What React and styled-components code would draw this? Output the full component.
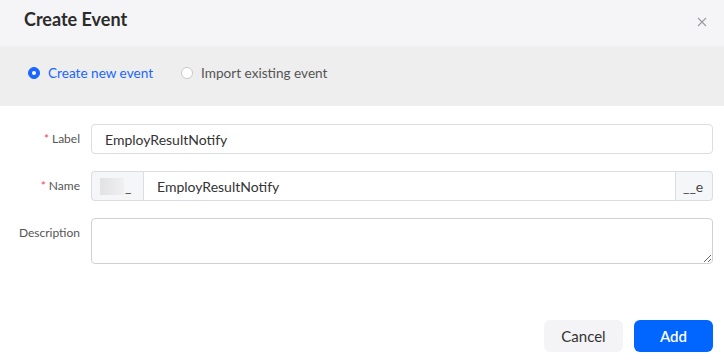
import React, { useState } from 'react';
import styled, { createGlobalStyle } from 'styled-components';

const GlobalStyle = createGlobalStyle`
  html, body {
    margin: 0;
    padding: 0;
    background: #ffffff;
  }
  body {
    font-family: Lato, "Liberation Sans", sans-serif;
    color: #333333;
  }
  * {
    box-sizing: border-box;
  }
`;

const Modal = styled.div`
  width: 724px;
  height: 360px;
  background: #ffffff;
  display: flex;
  flex-direction: column;
`;

const Header = styled.div`
  height: 46px;
  background: #f5f5f7;
  display: flex;
  align-items: flex-start;
  justify-content: space-between;
  padding: 7px 17px 0 24px;
`;

const Title = styled.h2`
  margin: 0;
  font-size: 18px;
  line-height: 24px;
  font-weight: 700;
  color: #2b2b2b;
`;

const CloseButton = styled.button`
  border: none;
  background: none;
  padding: 0;
  margin-top: 10px;
  width: 10px;
  height: 10px;
  display: flex;
  cursor: pointer;
`;

const ModeBand = styled.div`
  height: 60px;
  background: #eeeeee;
  display: flex;
  align-items: center;
  gap: 28px;
  padding: 0 0 6px 28px;
`;

const RadioOption = styled.label`
  display: flex;
  align-items: center;
  gap: 8px;
  font-size: 13.6px;
  color: ${(p) => (p.$checked ? '#1a66ff' : '#555555')};
  cursor: pointer;
`;

const RadioDot = styled.span`
  width: 12px;
  height: 12px;
  border-radius: 50%;
  background: ${(p) => (p.$checked ? '#1a66ff' : '#ffffff')};
  border: 1px solid ${(p) => (p.$checked ? '#1a66ff' : '#c9c9ce')};
  display: flex;
  align-items: center;
  justify-content: center;

  &::after {
    content: '';
    width: 4px;
    height: 4px;
    border-radius: 50%;
    background: #ffffff;
    display: ${(p) => (p.$checked ? 'block' : 'none')};
  }
`;

const Form = styled.div`
  display: grid;
  grid-template-columns: 80px 1fr;
  column-gap: 11px;
  row-gap: 17px;
  padding: 18px 11px 0 0;
`;

const FieldLabel = styled.div`
  font-size: 12px;
  line-height: 30px;
  color: #555555;
  text-align: right;
  white-space: nowrap;
`;

const Required = styled.span`
  color: #f5454f;
  margin-right: 3px;
`;

const TextInput = styled.input`
  height: 30px;
  width: 100%;
  border: 1px solid #dcdde2;
  border-radius: ${(p) => p.$radius || '4px'};
  padding: 0 13px;
  font-family: inherit;
  font-size: 14px;
  color: #333333;
  outline: none;
  background: #ffffff;
`;

const Group = styled.div`
  display: flex;
  height: 30px;
`;

const Addon = styled.div`
  height: 30px;
  width: ${(p) => p.$width};
  flex: none;
  background: #f5f6f8;
  border: 1px solid #dcdde2;
  border-radius: ${(p) => p.$radius};
  ${(p) => (p.$side === 'left' ? 'border-right: none;' : 'border-left: none;')}
  display: flex;
  align-items: center;
  padding: ${(p) => p.$padding};
  font-size: 14px;
  color: #444444;
`;

const MaskedPrefix = styled.span`
  width: 24px;
  height: 17px;
  background: linear-gradient(90deg, #e2e2e4, #f0f0f2);
  filter: blur(0.6px);
  margin-right: 1px;
`;

const TextArea = styled.textarea`
  height: 46px;
  width: 100%;
  border: 1px solid #d0d1d5;
  border-radius: 4px;
  padding: 6px 13px;
  font-family: inherit;
  font-size: 14px;
  resize: vertical;
  outline: none;
  display: block;
`;

const Footer = styled.div`
  margin-top: auto;
  display: flex;
  justify-content: flex-end;
  gap: 11px;
  padding: 0 11px 8px 0;
`;

const Button = styled.button`
  width: 79px;
  height: 32px;
  border: none;
  border-radius: 6px;
  font-family: inherit;
  font-size: 15px;
  font-weight: ${(p) => (p.$primary ? 600 : 400)};
  background: ${(p) => (p.$primary ? '#0066ff' : '#f4f4f6')};
  color: ${(p) => (p.$primary ? '#ffffff' : '#333333')};
  cursor: pointer;
`;

const CloseIcon = () => (
  <svg width="10" height="10" viewBox="0 0 10 10">
    <path d="M1 1L9 9M9 1L1 9" stroke="#9a9aa3" strokeWidth="1.1" fill="none" />
  </svg>
);

const App = () => {
  const [mode, setMode] = useState('new');
  return (
    <Modal>
      <GlobalStyle />
      <Header>
        <Title>Create Event</Title>
        <CloseButton aria-label="Close">
          <CloseIcon />
        </CloseButton>
      </Header>
      <ModeBand>
        <RadioOption $checked={mode === 'new'} onClick={() => setMode('new')}>
          <RadioDot $checked={mode === 'new'} />
          Create new event
        </RadioOption>
        <RadioOption $checked={mode === 'import'} onClick={() => setMode('import')}>
          <RadioDot $checked={mode === 'import'} />
          Import existing event
        </RadioOption>
      </ModeBand>
      <Form>
        <FieldLabel>
          <Required>*</Required>Label
        </FieldLabel>
        <TextInput defaultValue="EmployResultNotify" />

        <FieldLabel>
          <Required>*</Required>Name
        </FieldLabel>
        <Group>
          <Addon $side="left" $width="52px" $radius="4px 0 0 4px" $padding="0 0 0 8px">
            <MaskedPrefix />_
          </Addon>
          <TextInput defaultValue="EmployResultNotify" $radius="0" />
          <Addon $side="right" $width="37px" $radius="0 4px 4px 0" $padding="0 0 0 7px">
            __e
          </Addon>
        </Group>

        <FieldLabel>Description</FieldLabel>
        <TextArea />
      </Form>
      <Footer>
        <Button>Cancel</Button>
        <Button $primary>Add</Button>
      </Footer>
    </Modal>
  );
};

export default App;
